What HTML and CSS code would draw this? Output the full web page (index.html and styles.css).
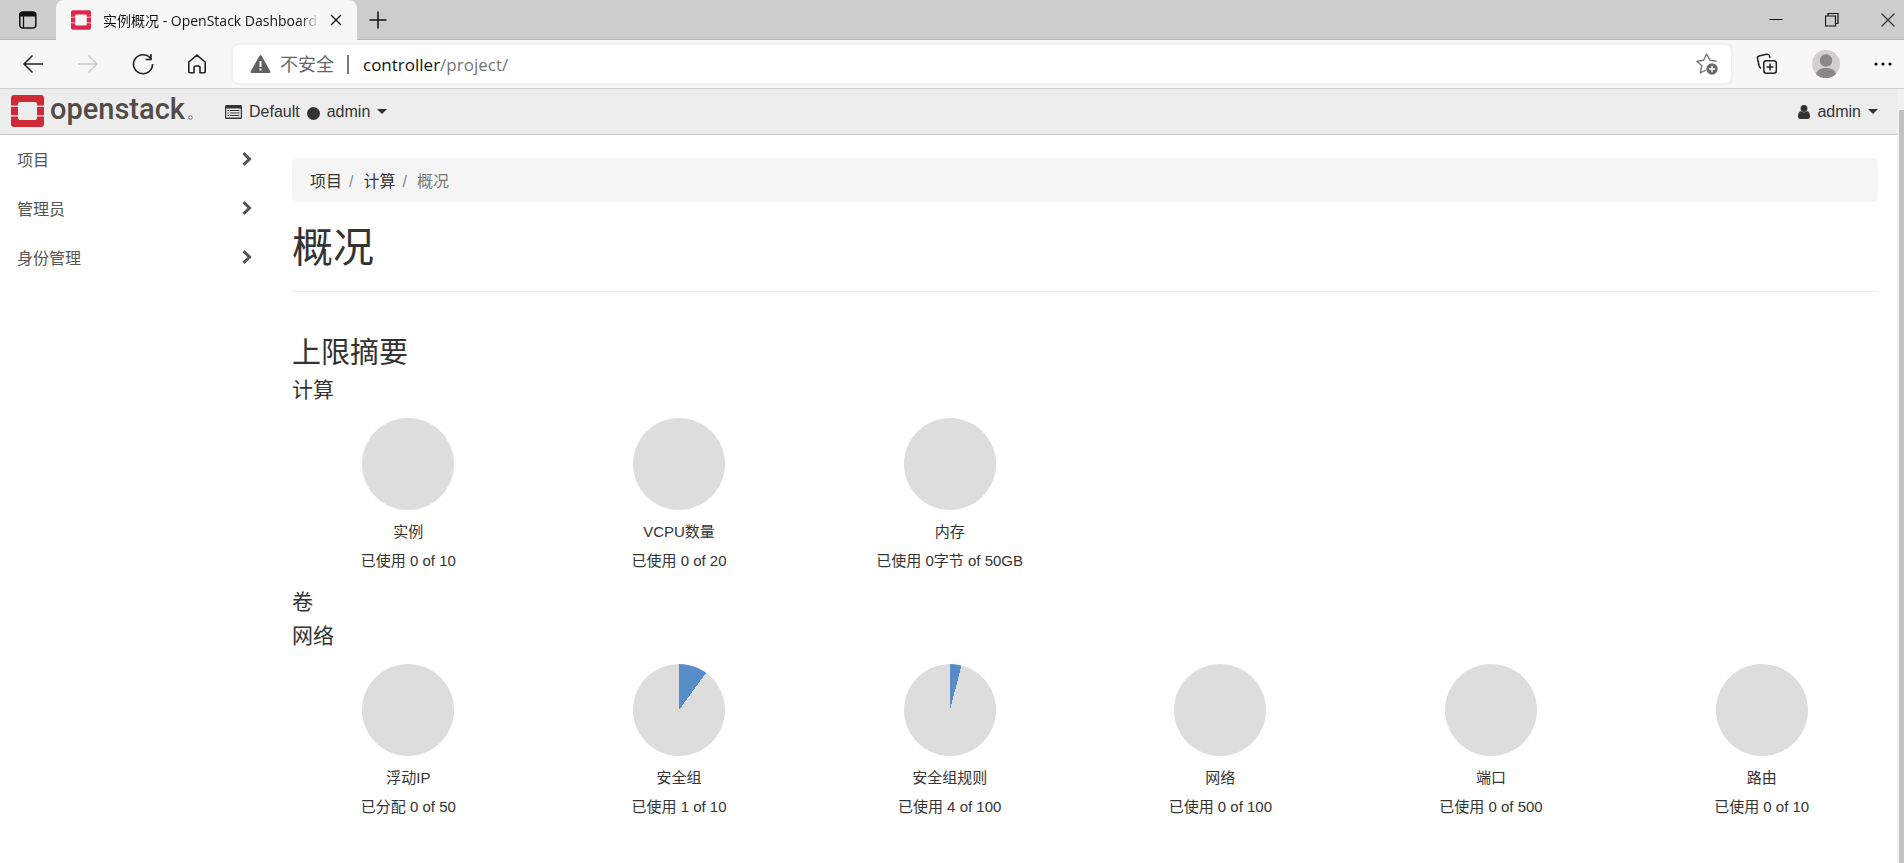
FILE: index.html
```
<!DOCTYPE html>
<html lang="zh-CN">
<head>
    <meta charset="UTF-8">
    <meta name="viewport" content="width=device-width, initial-scale=1.0">
    <title>实例概况 - OpenStack Dashboard</title>
    <link rel="stylesheet" href="styles.css">
</head>
<body>
    <!-- Tab strip -->
    <div class="tab-strip">
        <button class="icon-btn tab-menu" aria-label="Tab actions">
            <svg width="20" height="20" viewBox="0 0 20 20"><rect x="1.800" y="2" width="16" height="16" rx="3" fill="none" stroke="#111" stroke-width="1.500"/><path d="M1.500 6.500V5a3 3 0 0 1 3-3h10.500a3 3 0 0 1 3 3v1.500z" fill="#111"/><path d="M5.500 6v12" stroke="#111" stroke-width="1.300"/></svg>
        </button>
        <div class="tab">
            <svg class="tab-logo" width="20" height="20" viewBox="0 0 33 32"><use href="#os-mark"/></svg>
            <span class="tab-title">实例概况 - OpenStack Dashboard</span>
            <button class="icon-btn" aria-label="Close tab">
                <svg width="12" height="12" viewBox="0 0 12 12"><path d="M1 1l10 10M11 1L1 11" stroke="#111" stroke-width="1.400"/></svg>
            </button>
        </div>
        <button class="icon-btn new-tab" aria-label="New tab">
            <svg width="18" height="18" viewBox="0 0 18 18"><path d="M9 .5v17M.5 9h17" stroke="#111" stroke-width="1.500"/></svg>
        </button>
        <div class="window-btns">
            <button class="icon-btn" aria-label="Minimize"><svg width="14" height="14" viewBox="0 0 14 14"><path d="M.5 6.500h13" stroke="#111"/></svg></button>
            <button class="icon-btn" aria-label="Restore"><svg width="14" height="14" viewBox="0 0 14 14"><path d="M.5 3h10v10H.500zM3 3v-2.500h10v10h-2.500" fill="none" stroke="#111" stroke-width="1.200"/></svg></button>
            <button class="icon-btn" aria-label="Close"><svg width="14" height="14" viewBox="0 0 14 14"><path d="M.5.500l13 13M13.500.500l-13 13" stroke="#333" stroke-width="1.200"/></svg></button>
        </div>
    </div>

    <!-- Address bar -->
    <div class="toolbar">
        <div class="nav-btns">
            <button class="icon-btn" aria-label="Back"><svg width="22" height="20" viewBox="0 0 22 20"><path d="M21 10H2M10.500 1.500L2 10l8.500 8.500" fill="none" stroke="#222" stroke-width="1.500"/></svg></button>
            <button class="icon-btn" aria-label="Forward" disabled><svg width="22" height="20" viewBox="0 0 22 20"><path d="M1 10h19M11.500 1.500L20 10l-8.500 8.500" fill="none" stroke="#ccc" stroke-width="1.500"/></svg></button>
            <button class="icon-btn" aria-label="Refresh"><svg width="22" height="22" viewBox="0 0 22 22"><path d="M18.600 5.500A9.500 9.500 0 1 0 20.500 11M19 1v5.500h-5.500" fill="none" stroke="#222" stroke-width="1.600"/></svg></button>
            <button class="icon-btn" aria-label="Home"><svg width="20" height="20" viewBox="0 0 20 20"><path d="M1.800 8L10 1.200 18.200 8v9.800a1 1 0 0 1-1 1h-4.200v-5.300a1.500 1.500 0 0 0-1.500-1.500h-3A1.500 1.500 0 0 0 7 13.500v5.300H2.800a1 1 0 0 1-1-1z" fill="none" stroke="#222" stroke-width="1.600" stroke-linejoin="round"/></svg></button>
        </div>
        <div class="address">
            <svg width="21" height="20" viewBox="0 0 21 20"><path d="M10.500 2L19.500 18h-18z" fill="#606060" stroke="#606060" stroke-width="2" stroke-linejoin="round"/><path d="M10.500 7v6M10.500 14.500v2" stroke="#fff" stroke-width="2"/></svg>
            <span class="unsafe">不安全</span>
            <span class="url"><span class="host">controller</span>/project/</span>
            <button class="icon-btn star" aria-label="Add to favorites">
                <svg width="22" height="22" viewBox="0 0 22 22"><path d="M20.500 8.200l-6.500-1L10.500 1.200 7.600 7.200 1 8.200l4.800 4.500L4.300 20l5.500-2.800" fill="none" stroke="#777" stroke-width="1.400" stroke-linejoin="round"/><circle cx="16" cy="16" r="5.700" fill="#666"/><path d="M16 12.800v6.400M12.800 16h6.400" stroke="#fff" stroke-width="1.300"/></svg>
            </button>
        </div>
        <button class="icon-btn" aria-label="Collections">
            <svg width="22" height="22" viewBox="0 0 22 22"><rect x="7.800" y="7.800" width="12.500" height="12.500" rx="2.500" fill="none" stroke="#222" stroke-width="1.500"/><path d="M14 10.500v7M10.500 14h7M5 15.500C4 15 3.500 14 3.200 13L1.500 5.500C1.200 4 2 3.200 3 3L10.500 1.300C12.500 1 13.300 2 13.600 3.200L14 5" fill="none" stroke="#222" stroke-width="1.500"/></svg>
        </button>
        <button class="icon-btn" aria-label="Profile">
            <svg width="28" height="28" viewBox="0 0 28 28"><circle cx="14" cy="14" r="14" fill="#d2d0ce"/><circle cx="14" cy="10.500" r="6.200" fill="#8a8886"/><path d="M4 24c1.500-4.500 5.500-6 10-6s8.500 1.500 10 6a14 14 0 0 1-20 0z" fill="#8a8886"/></svg>
        </button>
        <button class="icon-btn" aria-label="Settings">
            <svg width="18" height="4" viewBox="0 0 18 4"><circle cx="2" cy="2" r="1.600"/><circle cx="9" cy="2" r="1.600"/><circle cx="16" cy="2" r="1.600"/></svg>
        </button>
    </div>

    <div class="viewport">
        <div class="page">
            <nav class="navbar">
                <a class="brand" href="#" aria-label="openstack">
                    <svg width="184" height="41" viewBox="0 0 184 41">
                        <defs>
                            <g id="os-mark">
                                <path d="M3 0h27a3 3 0 0 1 3 3v7.500h-7V9a2 2 0 0 0-2-2H9a2 2 0 0 0-2 2v1.500H0V3a3 3 0 0 1 3-3z"/>
                                <path d="M0 11.800h7v8.400H0zM26 11.800h7v8.400h-7z"/>
                                <path d="M0 21.500h7V23a2 2 0 0 0 2 2h15a2 2 0 0 0 2-2v-1.500h7V29a3 3 0 0 1-3 3H3a3 3 0 0 1-3-3z"/>
                            </g>
                        </defs>
                        <use class="mark" href="#os-mark" y="4"/>
                        <text class="wordmark" x="39" y="28">openstack</text>
                        <circle cx="179.500" cy="26.500" r="1.800" fill="none" stroke="#777"/>
                    </svg>
                </a>
                <button class="nav-link">
                    <svg width="17" height="14" viewBox="0 0 17 14"><path d="M0 1.500A1.500 1.500 0 0 1 1.500 0h14A1.500 1.500 0 0 1 17 1.500v11a1.500 1.500 0 0 1-1.500 1.500h-14A1.500 1.500 0 0 1 0 12.500zM1.200 3.500v9h14.600v-9z" fill="#333" fill-rule="evenodd"/><path d="M2.500 5.500H4M5 5.500h9.500M2.500 8H4M5 8h9.500M2.500 10.500H4M5 10.500h9.500" stroke="#333" stroke-width="1.200"/></svg>
                    <span>Default</span>
                    <span class="dot"></span>
                    <span>admin</span>
                    <span class="caret"></span>
                </button>
                <button class="nav-link user">
                    <svg width="12" height="14" viewBox="0 0 12 14" fill="#333"><circle cx="6" cy="3.500" r="3.400"/><path d="M2.800 6C1 6.500 0 8.500 0 11.500 0 13 .8 14 2.200 14h7.600c1.400 0 2.200-1 2.200-2.500C12 8.500 11 6.500 9.200 6 7.500 7.800 4.500 7.800 2.800 6z"/></svg>
                    <span>admin</span>
                    <span class="caret"></span>
                </button>
            </nav>

            <div class="columns">
                <aside class="sidebar">
                    <a href="#">项目 <svg width="10" height="14" viewBox="0 0 10 14"><path d="M1.500 1.200L7.500 7l-6 5.800"/></svg></a>
                    <a href="#">管理员 <svg width="10" height="14" viewBox="0 0 10 14"><path d="M1.500 1.200L7.500 7l-6 5.800"/></svg></a>
                    <a href="#">身份管理 <svg width="10" height="14" viewBox="0 0 10 14"><path d="M1.500 1.200L7.500 7l-6 5.800"/></svg></a>
                </aside>

                <main class="content">
                    <ol class="breadcrumb">
                        <li><a href="#">项目</a></li>
                        <li><a href="#">计算</a></li>
                        <li class="active">概况</li>
                    </ol>
                    <h1>概况</h1>

                    <h2>上限摘要</h2>
                    <h3>计算</h3>
                    <div class="charts">
                        <div class="chart">
                            <div class="pie"></div>
                            <div>实例</div>
                            <div>已使用 0 of 10</div>
                        </div>
                        <div class="chart">
                            <div class="pie"></div>
                            <div>VCPU数量</div>
                            <div>已使用 0 of 20</div>
                        </div>
                        <div class="chart">
                            <div class="pie"></div>
                            <div>内存</div>
                            <div>已使用 0字节 of 50GB</div>
                        </div>
                    </div>

                    <h3>卷</h3>
                    <h3>网络</h3>
                    <div class="charts">
                        <div class="chart">
                            <div class="pie"></div>
                            <div>浮动IP</div>
                            <div>已分配 0 of 50</div>
                        </div>
                        <div class="chart">
                            <div class="pie" style="--used: 10%"></div>
                            <div>安全组</div>
                            <div>已使用 1 of 10</div>
                        </div>
                        <div class="chart">
                            <div class="pie" style="--used: 4%"></div>
                            <div>安全组规则</div>
                            <div>已使用 4 of 100</div>
                        </div>
                        <div class="chart">
                            <div class="pie"></div>
                            <div>网络</div>
                            <div>已使用 0 of 100</div>
                        </div>
                        <div class="chart">
                            <div class="pie"></div>
                            <div>端口</div>
                            <div>已使用 0 of 500</div>
                        </div>
                        <div class="chart">
                            <div class="pie"></div>
                            <div>路由</div>
                            <div>已使用 0 of 10</div>
                        </div>
                    </div>
                </main>
            </div>
        </div>
        <div class="scrollbar"><div class="thumb"></div></div>
    </div>
</body>
</html>
```
FILE: styles.css
```
* {
    box-sizing: border-box;
}

body {
    margin: 0;
    height: 100vh;
    display: flex;
    flex-direction: column;
    overflow: hidden;
    font-family: "Liberation Sans", "Noto Sans CJK SC", sans-serif;
    font-size: 16px;
    color: #333;
    background: #fff;
}

a {
    color: inherit;
    text-decoration: none;
}

svg {
    display: block;
    flex: none;
}

button {
    font: inherit;
    color: inherit;
    background: none;
    border: none;
    padding: 0;
}

.icon-btn {
    display: flex;
    align-items: center;
    justify-content: center;
    flex: none;
}

/* browser tabs */
.tab-strip {
    display: flex;
    align-items: center;
    height: 40px;
    background: #cdcdcd;
    border-bottom: 1px solid #b8b8b8;
    font-family: "Open Sans", "Noto Sans CJK SC", sans-serif;
    font-size: 14px;
    color: #111;
}

.tab-menu {
    width: 56px;
}

.tab {
    display: flex;
    align-items: center;
    width: 301px;
    height: 40px;
    padding: 0 15px;
    background: #f7f7f7;
    border-radius: 8px 8px 0 0;
}

.tab-logo {
    fill: #e0264a;
}

.tab-title {
    flex: 1;
    margin: 0 10px 0 12px;
    overflow: hidden;
    white-space: nowrap;
    -webkit-mask-image: linear-gradient(to right, #000 90%, transparent);
    mask-image: linear-gradient(to right, #000 90%, transparent);
}

.new-tab {
    margin-left: 12px;
}

.window-btns {
    display: flex;
    gap: 42px;
    margin-left: auto;
    padding-right: 9px;
}

/* address bar */
.toolbar {
    display: flex;
    align-items: center;
    gap: 34px;
    height: 49px;
    padding-right: 12px;
    background: #f7f7f7;
    border-bottom: 1px solid #cfcfcf;
}

.nav-btns {
    display: flex;
    align-items: center;
    gap: 33px;
    padding-left: 22px;
}

.address {
    flex: 1;
    display: flex;
    align-items: center;
    height: 38px;
    margin: 0 -9px 0 -8px;
    padding: 0 13px 0 17px;
    background: #fff;
    border-radius: 6px;
    box-shadow: 0 0 5px rgba(0, 0, 0, 0.08);
    font-family: "Open Sans", "Noto Sans CJK SC", sans-serif;
    font-size: 17px;
}

.unsafe {
    margin-left: 9px;
    padding-right: 13px;
    border-right: 2px solid #777;
    font-size: 18px;
    line-height: 19px;
    color: #666;
}

.url {
    margin-left: 14px;
    color: #777;
}

.host {
    color: #111;
}

.star {
    margin-left: auto;
}

/* dashboard */
.viewport {
    flex: 1;
    display: flex;
    min-height: 0;
}

.page {
    flex: 1;
    overflow: hidden;
}

.scrollbar {
    width: 7px;
    padding: 21px 0 0 2px;
    background: #f1f1f1;
}

.thumb {
    height: 100%;
    background: #c1c1c1;
}

.navbar {
    display: flex;
    align-items: center;
    height: 46px;
    padding: 0 19px 0 11px;
    background: #ededed;
    border-bottom: 1px solid #c8c8c8;
}

.mark {
    fill: #cf2a36;
}

.wordmark {
    font-family: Roboto, sans-serif;
    font-size: 29px;
    font-weight: 500;
    fill: #524b46;
}

.nav-link {
    display: flex;
    align-items: center;
    gap: 7px;
    margin-left: 30px;
}

.user {
    margin-left: auto;
}

.dot {
    width: 13px;
    height: 13px;
    margin-top: 3px;
    border-radius: 50%;
    background: #333;
}

.caret {
    border-top: 5px solid #333;
    border-left: 5px solid transparent;
    border-right: 5px solid transparent;
}

.columns {
    display: flex;
}

.sidebar {
    width: 273px;
}

.sidebar a {
    display: flex;
    align-items: center;
    justify-content: space-between;
    height: 49px;
    padding: 0 21px 2px 17px;
    color: #555;
}

.sidebar path {
    fill: none;
    stroke: #555;
    stroke-width: 3;
}

.content {
    flex: 1;
    padding: 23px 19px;
}

.breadcrumb {
    display: flex;
    height: 44px;
    align-items: center;
    margin: 0;
    padding: 0 18px;
    list-style: none;
    background: #f5f5f5;
    border-radius: 5px;
}

.breadcrumb li + li::before {
    content: "/";
    padding: 0 10px 0 7px;
    color: #888;
}

.breadcrumb .active {
    color: #777;
}

h1, h2, h3 {
    margin: 0;
    font-weight: normal;
}

h1 {
    padding: 24px 0 20px;
    border-bottom: 1px solid #eee;
    font-size: 41px;
    line-height: 45px;
}

h2 {
    margin: 45px 0 9px;
    font-size: 29px;
    line-height: 32px;
}

h3 {
    margin-bottom: 11px;
    font-size: 21px;
    line-height: 23px;
}

.charts {
    display: grid;
    grid-template-columns: repeat(6, 1fr);
    margin: 0 -19px;
    padding: 6px 0 18px;
}

.chart {
    display: flex;
    flex-direction: column;
    align-items: center;
    gap: 6px;
    font-size: 15px;
    line-height: 23px;
}

.pie {
    width: 92px;
    height: 92px;
    margin-bottom: 4px;
    border-radius: 50%;
    background: conic-gradient(#568cc8 var(--used, 0%), #ddd 0);
}
```
